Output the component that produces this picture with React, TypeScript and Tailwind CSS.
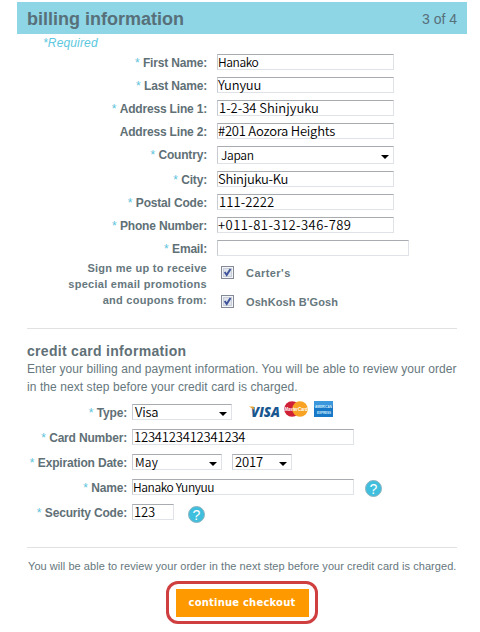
import { ReactNode } from "react";

const inputFont = "font-['Noto_Sans_CJK_JP','Liberation_Sans',sans-serif] font-[350] leading-[14px] text-black";

function Label({ children, required = true, width }: { children: string; required?: boolean; width: string }) {
  return (
    <div className={`${width} shrink-0 text-right text-[12px] font-bold leading-[16px] tracking-[-0.18px] text-[#5f7076] whitespace-nowrap`}>
      {required && <span className="font-normal tracking-normal text-[#5cc3dc]">* </span>}
      {children}
    </div>
  );
}

function Box({ value, width, height = "h-4", tracking = "tracking-normal", pad = "pl-px", size = "text-[13px]", select = false }: {
  value: string; width: string; height?: string; tracking?: string; pad?: string; size?: string; select?: boolean;
}) {
  return (
    <div className={`${width} ${height} ${tracking} ${pad} ${inputFont} ${size} shrink-0 flex items-center justify-between whitespace-nowrap border border-[#dfe2e6] border-t-[#a8abb0] border-l-[#c9ccd2] bg-white`}>
      <span>{value}</span>
      {select && (
        <svg className="mr-[4px] mt-[3px]" width="8" height="4" viewBox="0 0 8 4">
          <path d="M0 0H8L4 4Z" fill="#000" />
        </svg>
      )}
    </div>
  );
}

function Row({ label, required, narrow = false, children, className = "h-4" }: {
  label: string; required?: boolean; narrow?: boolean; children: ReactNode; className?: string;
}) {
  const drop = className === "h-4" ? "mt-[2px]" : "";
  return (
    <div className={`flex items-center ${className}`}>
      <Label required={required} width={`${drop} ${narrow ? "w-[127px] mr-[5px]" : "w-[207px] mr-[10px]"}`}>{label}</Label>
      {children}
    </div>
  );
}

function Check({ label, tracking }: { label: string; tracking: string }) {
  return (
    <div className="flex h-[13px] items-center">
      <svg width="13" height="13" viewBox="0 0 13 13">
        <rect x=".5" y=".5" width="12" height="12" fill="#f4f5f8" stroke="#858b96" />
        <rect x="2.5" y="2.5" width="8" height="8" fill="#dfe3ea" stroke="#c9ced8" />
        <path d="M3.7 6 5.7 9 9.5 3" fill="none" stroke="#40549b" strokeWidth="2" />
      </svg>
      <span className={`ml-3 pt-[2px] text-[11px] font-bold leading-[13px] text-[#66777d] ${tracking}`}>{label}</span>
    </div>
  );
}

function Help({ className }: { className: string }) {
  return (
    <div className={`flex size-[17px] shrink-0 items-center justify-center rounded-full border border-[#8fb3bf] bg-[#3fbfdd] text-[14px] leading-none text-white ${className}`}>
      ?
    </div>
  );
}

function Cards() {
  return (
    <svg className="ml-[17px] mb-[4px] shrink-0 overflow-visible" width="85" height="18" viewBox="0 0 85 18">
      <text x="2" y="16" fontFamily="Open Sans, sans-serif" fontSize="14.5" fontWeight="800" fontStyle="italic" fill="#17568f" textLength="29" lengthAdjust="spacingAndGlyphs">VISA</text>
      <path d="M0 5.5H4.5L5.5 9Z" fill="#eda52e" />
      <circle cx="43" cy="8" r="7.8" fill="#cf2035" />
      <circle cx="51" cy="8" r="7.8" fill="#f8a323" />
      <text x="35.5" y="10" fontFamily="Liberation Sans, sans-serif" fontSize="6" fontWeight="bold" fontStyle="italic" fill="#fff" textLength="23" lengthAdjust="spacingAndGlyphs">MasterCard</text>
      <rect x="65" y="0" width="19" height="16" fill="#1878c8" />
      <path d="M65 0H84V4L65 6Z" fill="#3b98dd" />
      <text x="66" y="7" fontFamily="Liberation Sans, sans-serif" fontSize="3.4" fontWeight="bold" fill="#d9f0ff" textLength="17" lengthAdjust="spacingAndGlyphs">AMERICAN</text>
      <text x="68" y="13" fontFamily="Liberation Sans, sans-serif" fontSize="3.4" fontWeight="bold" fill="#d9f0ff" textLength="14" lengthAdjust="spacingAndGlyphs">EXPRESS</text>
    </svg>
  );
}

export default function App() {
  return (
    <div className="h-[632px] w-[480px] overflow-hidden bg-white pt-[2px] font-['Liberation_Sans',Arial,sans-serif] text-[#66777d]">
      <header className="ml-[17px] flex h-8 w-[450px] items-center justify-between bg-[#8ed5e6] pl-[10px] pr-[10px] text-[#577079]">
        <h1 className="pt-[2px] text-[18px] font-bold leading-5">billing information</h1>
        <span className="pt-[2px] text-[14px] leading-5">3 of 4</span>
      </header>
      <div className="ml-[43px] mt-[1px] h-[19px] text-[12px] italic leading-4 tracking-[0.15px] text-[#5cc8e0]">*Required</div>

      <section className="flex flex-col gap-[7px]">
        <Row label="First Name:"><Box value="Hanako" width="w-[177px]" pad="pl-0" size="text-[12px]" tracking="tracking-[-0.4px]" /></Row>
        <Row label="Last Name:"><Box value="Yunyuu" width="w-[177px]" pad="pl-0" tracking="tracking-[-0.2px]" /></Row>
        <Row label="Address Line 1:"><Box value="1-2-34 Shinjyuku" width="w-[177px]" /></Row>
        <Row label="Address Line 2:" required={false}><Box value="#201 Aozora Heights" width="w-[177px]" pad="pl-0" tracking="tracking-[-0.23px]" /></Row>
        <Row label="Country:" className="h-[18px]"><Box value="Japan" width="w-[177px]" height="h-[18px]" pad="pl-[3px]" size="text-[12px]" tracking="tracking-[-0.3px]" select /></Row>
        <Row label="City:"><Box value="Shinjuku-Ku" width="w-[177px]" pad="pl-0" tracking="tracking-[-0.3px]" /></Row>
        <Row label="Postal Code:"><Box value="111-2222" width="w-[177px]" tracking="tracking-[0.1px]" /></Row>
        <Row label="Phone Number:"><Box value="+011-81-312-346-789" width="w-[177px]" pad="pl-0" tracking="tracking-[0.45px]" /></Row>
        <Row label="Email:"><Box value="" width="w-[192px]" /></Row>
      </section>

      <div className="mt-[4px] flex h-[52px]">
        <div className="w-[207px] whitespace-nowrap text-right text-[11px] font-bold leading-4 tracking-[0.28px]">
          Sign me up to receive<br />special email promotions<br />and coupons from:
        </div>
        <div className="ml-[14px] flex flex-col gap-4 pt-[6px]">
          <Check label="Carter's" tracking="tracking-[0.45px]" />
          <Check label="OshKosh B'Gosh" tracking="tracking-[0.1px]" />
        </div>
      </div>

      <hr className="ml-[27px] mt-[16px] w-[430px] border-[#dfe1e2]" />
      <h2 className="ml-[27px] mt-[13px] text-[14px] font-bold leading-[18px] tracking-[0.3px] text-[#5f7076]">credit card information</h2>
      <p className="ml-[27px] whitespace-nowrap text-[12px] leading-[18px] tracking-[0.075px]">
        Enter your billing and payment information. You will be able to review your order<br />
        in the next step before your credit card is charged.
      </p>

      <section className="mt-[8px] flex flex-col gap-[9px]">
        <Row narrow label="Type:"><Box value="Visa" width="w-[100px]" pad="pl-[2px]" tracking="tracking-[-0.2px]" select /><Cards /></Row>
        <Row narrow label="Card Number:"><Box value="1234123412341234" width="w-[222px]" tracking="tracking-[-0.18px]" /></Row>
        <Row narrow label="Expiration Date:">
          <Box value="May" width="w-[90px]" pad="pl-[2px]" size="text-[12px]" tracking="tracking-[0.2px]" select />
          <div className="w-[10px]" />
          <Box value="2017" width="w-[60px]" pad="pl-[2px]" tracking="tracking-[-0.1px]" select />
        </Row>
        <Row narrow label="Name:"><Box value="Hanako Yunyuu" width="w-[222px]" pad="pl-0" size="text-[12px]" tracking="tracking-[-0.4px]" /><Help className="ml-[11px] mt-[3px]" /></Row>
        <Row narrow label="Security Code:"><Box value="123" width="w-[42px]" tracking="tracking-[-0.1px]" /><Help className="ml-[14px] mt-[5px]" /></Row>
      </section>

      <hr className="ml-[27px] mt-[27px] w-[430px] border-[#dfe1e2]" />
      <p className="ml-[28px] mt-[10px] whitespace-nowrap text-[11px] leading-4 tracking-[0.05px]">
        You will be able to review your order in the next step before your credit card is charged.
      </p>
      <div className="ml-[166px] mt-[7px] flex h-[43px] w-[152px] items-center justify-center rounded-[12px] border-[3px] border-[#cf3f3f]">
        <button className="h-7 w-[133px] bg-[#ff9900] font-['DejaVu_Sans',sans-serif] text-[10px] font-bold leading-7 tracking-[0.2px] text-white whitespace-nowrap">continue checkout</button>
      </div>
    </div>
  );
}
